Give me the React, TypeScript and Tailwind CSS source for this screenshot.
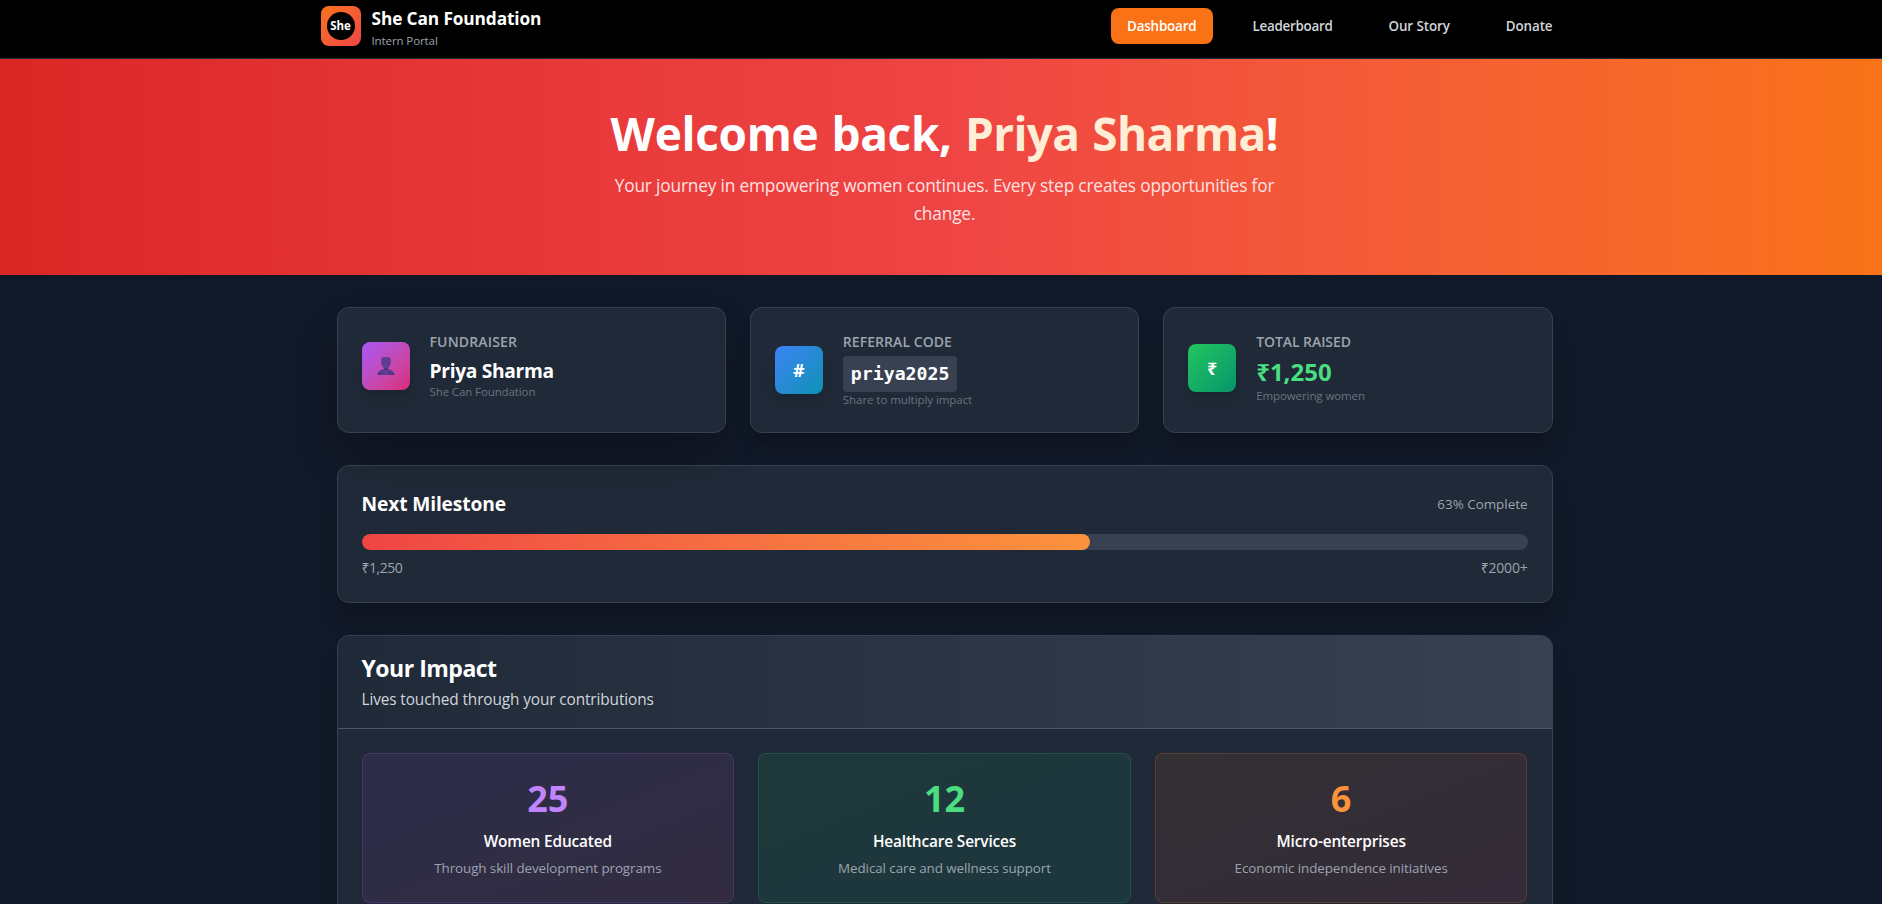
import React from 'react';

const navLinks = [
  { label: 'Leaderboard', tracking: 'tracking-[-0.27px]' },
  { label: 'Our Story', tracking: 'tracking-[-0.1px]' },
  { label: 'Donate', tracking: 'tracking-[-0.08px]' },
];

const impacts = [
  {
    value: '25',
    title: 'Women Educated',
    text: 'Through skill development programs',
    box: 'from-[#a855f7]/10 to-[#ec4899]/10 border-[#a855f7]/20',
    color: 'text-[#c084fc]',
  },
  {
    value: '12',
    title: 'Healthcare Services',
    text: 'Medical care and wellness support',
    box: 'from-[#22c55e]/10 to-[#10b981]/10 border-[#22c55e]/20',
    color: 'text-[#4ade80]',
  },
  {
    value: '6',
    title: 'Micro-enterprises',
    text: 'Economic independence initiatives',
    box: 'from-[#f97316]/10 to-[#ef4444]/10 border-[#f97316]/20',
    color: 'text-[#fb923c]',
  },
];

function Bust() {
  return (
    <svg width="18" height="18" viewBox="0 0 18 18">
      <defs>
        <linearGradient id="bust" x1="0" y1="0" x2="1" y2="0">
          <stop offset="0" stopColor="#4b3579" />
          <stop offset="0.5" stopColor="#653f9a" />
          <stop offset="1" stopColor="#4b3579" />
        </linearGradient>
      </defs>
      <path
        d="M5.2 0.6 C6.5 -0.1 11.5 -0.1 12.8 0.6 L13.7 2.2 L13.5 5.2 C14.1 5.4 14 7 13.2 7.3 C12.9 8.9 12 10.2 11 11 L11.1 12 C13.8 12.7 16.8 13.9 17.6 18 L0.4 18 C1.2 13.9 4.2 12.7 6.9 12 L7 11 C6 10.2 5.1 8.9 4.8 7.3 C4 7 3.9 5.4 4.5 5.2 L4.3 2.2 Z"
        fill="url(#bust)"
      />
      <path d="M6.9 12 L9 13.2 L11.1 12 L11 11 Q9 12.2 7 11 Z" fill="#46316f" />
    </svg>
  );
}

function StatCard({
  icon,
  iconClass,
  label,
  labelClass,
  cardClass,
  children,
}: {
  icon: React.ReactNode;
  iconClass: string;
  label: string;
  labelClass: string;
  cardClass: string;
  children: React.ReactNode;
}) {
  return (
    <div className={`rounded-xl border border-[#374151] bg-[#1f2937] p-6 ${cardClass}`}>
      <div className="flex items-center gap-5">
        <div
          className={`flex size-12 shrink-0 items-center justify-center rounded-lg bg-linear-to-br text-lg font-bold text-white shadow-lg ${iconClass}`}
        >
          {icon}
        </div>
        <div>
          <div className={`mb-1 text-sm leading-5 font-semibold text-[#9ca3af] ${labelClass}`}>{label}</div>
          {children}
        </div>
      </div>
    </div>
  );
}

export default function App() {
  return (
    <div className="h-[904px] w-full overflow-hidden bg-[#111827] font-['Open_Sans','Noto_Sans',sans-serif] text-white">
      <div className="w-[1889px]">
        <header className="border-b border-[#1f2937] bg-black">
          <div className="mx-auto flex h-[58px] max-w-7xl items-start justify-between px-4 pt-1.5">
            <div className="flex items-center gap-[11px]">
              <div className="flex size-10 items-center justify-center rounded-lg bg-linear-to-br from-[#f97316] to-[#ef4444]">
                <div className="flex size-7 items-center justify-center rounded-full bg-black text-[11.5px] leading-4 font-bold">
                  She
                </div>
              </div>
              <div className="-mt-0.5 -mb-[3px] pt-px">
                <div className="text-[17.3px] leading-7 font-bold tracking-[-0.12px] whitespace-nowrap">She Can Foundation</div>
                <div className="text-[11.5px] leading-4 tracking-[-0.1px] text-[#9ca3af]">Intern Portal</div>
              </div>
            </div>
            <nav className="mt-0.5 flex gap-6 text-[13.4px] leading-5 font-semibold">
              <a className="rounded-lg bg-[#f97316] px-4 py-2 tracking-[-0.17px]">Dashboard</a>
              {navLinks.map((l) => (
                <a key={l.label} className={`px-4 py-2 text-[#d1d5db] ${l.tracking}`}>
                  {l.label}
                </a>
              ))}
            </nav>
          </div>
        </header>

        <section className="h-[216px] bg-linear-to-r from-[#dc2626] via-[#ef4444] to-[#f97316] py-12 text-center">
          <h1 className="mb-4 h-12 pt-0.5 text-[46px] leading-[48px] font-bold tracking-[-0.35px] [word-spacing:1.5px]">
            Welcome back, <span className="tracking-[-0.65px] text-[#ffedd5]">Priya Sharma</span>!
          </h1>
          <p className="mx-auto max-w-2xl pt-px text-[17.3px] leading-7 tracking-[-0.17px] text-[#fee2e2]">
            Your journey in empowering women continues. Every step creates opportunities for change.
          </p>
        </section>

        <main className="mx-auto flex max-w-7xl flex-col gap-8 px-8 pt-8">
          <div className="grid grid-cols-3 gap-6">
            <StatCard
              icon={<Bust />}
              iconClass="from-[#a855f7] to-[#db2777]"
              label="FUNDRAISER"
              labelClass="tracking-[0.16px]"
              cardClass="relative z-10 shadow-2xl"
            >
              <div className="h-7 pt-px text-[19.2px] leading-7 font-bold tracking-[-0.31px]">Priya Sharma</div>
              <div className="text-[11.5px] leading-4 tracking-[-0.11px] text-[#6b7280]">She Can Foundation</div>
            </StatCard>
            <StatCard
              icon="#"
              iconClass="from-[#3b82f6] to-[#0891b2]"
              label="REFERRAL CODE"
              labelClass="tracking-[0.06px]"
              cardClass="shadow-xl"
            >
              <div className="w-fit rounded bg-[#374151] px-2 py-1 font-['DejaVu_Sans_Mono',monospace] text-[18.2px] leading-7 font-bold">
                priya2025
              </div>
              <div className="text-[11.5px] leading-4 tracking-[-0.06px] text-[#6b7280]">Share to multiply impact</div>
            </StatCard>
            <StatCard
              icon="₹"
              iconClass="from-[#22c55e] to-[#059669]"
              label="TOTAL RAISED"
              labelClass="tracking-[-0.07px]"
              cardClass="shadow-xl"
            >
              <div className="text-2xl leading-8 font-bold text-[#4ade80]">₹1,250</div>
              <div className="text-[11.5px] leading-4 tracking-[-0.09px] text-[#6b7280]">Empowering women</div>
            </StatCard>
          </div>

          <div className="rounded-xl border border-[#374151] bg-[#1f2937] p-6 shadow-xl">
            <div className="mb-4 flex h-7 items-center justify-between">
              <h2 className="text-[19.2px] leading-7 font-bold tracking-[-0.13px]">Next Milestone</h2>
              <span className="text-[13.4px] leading-5 text-[#9ca3af]">63% Complete</span>
            </div>
            <div className="h-4 overflow-hidden rounded-full bg-[#374151]">
              <div className="h-full w-[62.5%] rounded-full bg-linear-to-r from-[#ef4444] to-[#fb923c]" />
            </div>
            <div className="mt-2 flex justify-between text-sm leading-5 text-[#9ca3af]">
              <span className="tracking-[-0.5px]">₹1,250</span>
              <span className="tracking-[-0.2px]">₹2000+</span>
            </div>
          </div>

          <div className="overflow-hidden rounded-xl border border-[#374151] bg-[#1f2937] shadow-xl">
            <div className="border-b border-[#4b5563] bg-linear-to-r from-[#1f2937] to-[#374151] px-6 py-4">
              <h2 className="h-8 text-[23px] leading-8 font-bold tracking-[-0.5px]">Your Impact</h2>
              <p className="mt-1 text-[15.4px] leading-6 tracking-[-0.12px] text-[#d1d5db]">
                Lives touched through your contributions
              </p>
            </div>
            <div className="grid grid-cols-3 gap-6 p-6">
              {impacts.map((x) => (
                <div key={x.title} className={`rounded-lg border bg-linear-to-br p-6 text-center ${x.box}`}>
                  <div className={`mb-3 h-10 pt-px text-4xl leading-10 font-bold ${x.color}`}>{x.value}</div>
                  <div className="mb-1 text-[15.4px] leading-6 font-semibold tracking-[-0.15px]">{x.title}</div>
                  <div className="text-[13.4px] leading-5 tracking-[-0.08px] text-[#9ca3af]">{x.text}</div>
                </div>
              ))}
            </div>
          </div>
        </main>
      </div>
    </div>
  );
}
